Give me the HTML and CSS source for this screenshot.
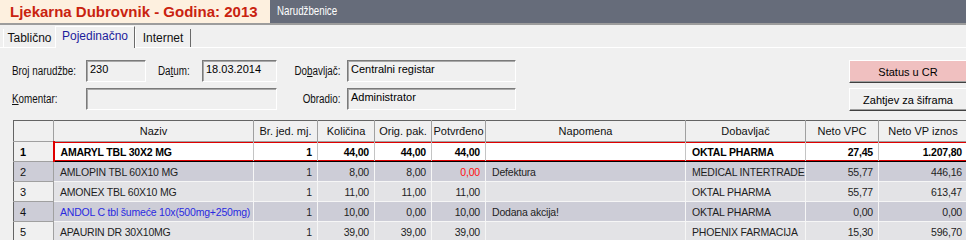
FILE: index.html
```html
<!DOCTYPE html>
<html lang="hr">
<head>
  <meta charset="UTF-8" />
  <title>Narudžbenice</title>
  <link rel="stylesheet" href="styles.css">
</head>
<body>

  <div class="topbar">
    <div class="brand">Ljekarna Dubrovnik - Godina: 2013</div>
    <div class="module"><span>Narudžbenice</span></div>
  </div>

  <div class="tabs">
    <span class="tab tab-first">Tablično</span>
    <span class="tab active">Pojedinačno</span>
    <span class="tab">Internet</span>
  </div>

  <div class="form">
    <label class="lbl">Broj narudžbe:</label>
    <div class="field">230</div>
    <span></span>
    <label class="lbl">Da<u>t</u>um:</label>
    <div class="field">18.03.2014</div>
    <label class="lbl lbl-right">Do<u>b</u>avljač:</label>
    <div class="field">Centralni registar</div>
    <span></span>
    <button class="btn btn-status">Status u CR</button>

    <label class="lbl"><u>K</u>omentar:</label>
    <div class="field field-wide"></div>
    <label class="lbl lbl-right">Obradio:</label>
    <div class="field">Administrator</div>
    <span></span>
    <button class="btn">Zahtjev za šiframa</button>
  </div>

  <table class="grid">
    <colgroup>
      <col style="width:40px"><col style="width:200px"><col style="width:64px">
      <col style="width:57px"><col style="width:57px"><col style="width:54px">
      <col style="width:200px"><col style="width:120px"><col style="width:73px">
      <col style="width:89px">
    </colgroup>
    <thead>
      <tr>
        <th></th>
        <th>Naziv</th>
        <th>Br. jed. mj.</th>
        <th>Količina</th>
        <th>Orig. pak.</th>
        <th>Potvrđeno</th>
        <th>Napomena</th>
        <th>Dobavljač</th>
        <th>Neto VPC</th>
        <th>Neto VP iznos</th>
      </tr>
    </thead>
    <tbody>
      <tr class="sel">
        <td class="rh">1</td>
        <td class="first">AMARYL TBL 30X2 MG</td>
        <td class="num">1</td>
        <td class="num">44,00</td>
        <td class="num">44,00</td>
        <td class="num">44,00</td>
        <td></td>
        <td>OKTAL PHARMA</td>
        <td class="num">27,45</td>
        <td class="num">1.207,80</td>
      </tr>
      <tr class="dark">
        <td class="rh">2</td>
        <td>AMLOPIN TBL 60X10 MG</td>
        <td class="num">1</td>
        <td class="num">8,00</td>
        <td class="num">8,00</td>
        <td class="num red">0,00</td>
        <td>Defektura</td>
        <td>MEDICAL INTERTRADE</td>
        <td class="num">55,77</td>
        <td class="num">446,16</td>
      </tr>
      <tr>
        <td class="rh">3</td>
        <td>AMONEX TBL 60X10 MG</td>
        <td class="num">1</td>
        <td class="num">11,00</td>
        <td class="num">11,00</td>
        <td class="num">11,00</td>
        <td></td>
        <td>OKTAL PHARMA</td>
        <td class="num">55,77</td>
        <td class="num">613,47</td>
      </tr>
      <tr class="dark">
        <td class="rh">4</td>
        <td class="blue">ANDOL C tbl šumeće 10x(500mg+250mg)</td>
        <td class="num">1</td>
        <td class="num">10,00</td>
        <td class="num">0,00</td>
        <td class="num">10,00</td>
        <td>Dodana akcija!</td>
        <td>OKTAL PHARMA</td>
        <td class="num">0,00</td>
        <td class="num">0,00</td>
      </tr>
      <tr>
        <td class="rh">5</td>
        <td>APAURIN DR 30X10MG</td>
        <td class="num">1</td>
        <td class="num">39,00</td>
        <td class="num">39,00</td>
        <td class="num">39,00</td>
        <td></td>
        <td>PHOENIX FARMACIJA</td>
        <td class="num">15,30</td>
        <td class="num">596,70</td>
      </tr>
    </tbody>
  </table>

</body>
</html>
```

FILE: styles.css
```css
:root {
  --page: #f0f0f0;
  --bar: #666c7a;
  --title: #c9220f;
  --row-dark: #cdcdd7;
  --row-light: #e3e3e6;
  --line: #a0a0a0;
}

* {
  box-sizing: border-box;
}

body {
  margin: 0;
  width: 966px;
  height: 240px;
  overflow: hidden;
  background-color: var(--page);
  font-family: 'Liberation Sans', Arial, sans-serif;
  font-size: 11px;
  color: #1e1e1e;
}

/* top bar */
.topbar {
  display: flex;
  height: 25px;
  background-color: var(--bar);
  border-bottom: 2px solid #9c9c9c;
}

.brand {
  width: 270px;
  padding-left: 10px;
  background-color: #fdf0df;
  color: var(--title);
  font-size: 15px;
  font-weight: bold;
  line-height: 23px;
}

.module {
  padding-left: 7px;
  color: white;
  font-size: 13px;
  line-height: 22px;
}

.module span {
  display: inline-block;
  transform: scaleX(0.75);
  transform-origin: left center;
}

/* tabs */
.tabs {
  display: flex;
  align-items: flex-end;
  height: 23px;
  padding-left: 3px;
  border-bottom: 1px solid white;
}

.tab {
  height: 18px;
  line-height: 18px;
  text-align: center;
  font-size: 12px;
  color: #111;
  border-left: 1px solid white;
  border-right: 1px solid #6a6a6a;
  width: 56px;
}

.tab-first {
  width: 52px;
  border-right: none;
}

.tab.active {
  width: 80px;
  height: 22px;
  line-height: 19px;
  margin-bottom: -1px;
  border-top: 1px solid white;
  background-color: var(--page);
  color: #1c1c9c;
}

/* form */
.form {
  display: grid;
  grid-template-columns: 74px 60px 12px 44px 75px 70px 169px 333px 120px;
  grid-template-rows: 22px 22px;
  row-gap: 6px;
  padding: 12px 0 0 12px;
  width: 1000px;
}

.lbl {
  align-self: center;
  white-space: nowrap;
  font-size: 12px;
  color: #111;
  transform: scaleX(0.82);
  transform-origin: left center;
}

.lbl-right {
  text-align: right;
  padding-right: 8px;
  transform-origin: right center;
}

.field {
  border: 1px solid;
  border-color: #7a7a7a white white #7a7a7a;
  box-shadow: inset 1px 1px 0 #a8a8a8;
  padding: 2px 3px;
  font-size: 11px;
  color: #000;
  background-color: var(--page);
}

.field-wide {
  grid-column: 2 / 6;
}

.btn {
  height: 23px;
  padding: 0;
  font-family: 'Liberation Sans', Arial, sans-serif;
  font-size: 11px;
  color: #000;
  background-color: var(--page);
  border: 1px solid;
  border-color: white #404040 #404040 white;
  box-shadow: inset 0 -1px 0 #a0a0a0;
  width: 118px;
}

.btn-status {
  background-color: #f0c0c0;
}

/* grid */
.grid {
  margin: 10px 0 0 13px;
  border-collapse: collapse;
  table-layout: fixed;
  width: 954px;
  border-top: 1px solid #646464;
  border-left: 1px solid #646464;
}

.grid th {
  height: 21px;
  padding: 0;
  font-weight: normal;
  color: #111;
  background-color: var(--page);
  border-right: 1px solid var(--line);
  border-bottom: 1px solid var(--line);
  white-space: nowrap;
}

.grid td {
  height: 20px;
  padding: 0 5px 0 6px;
  font-size: 10.5px;
  letter-spacing: -0.2px;
  white-space: nowrap;
  overflow: hidden;
  background-color: var(--row-light);
  border-right: 1px solid #f6f6f6;
  border-bottom: 1px solid #f6f6f6;
}

.grid tr.dark td {
  background-color: var(--row-dark);
}

.grid td.rh {
  font-size: 11px;
  letter-spacing: 0;
  background-color: var(--page);
  border-right: 1px solid var(--line);
  border-bottom: 1px solid var(--line);
  color: #111;
}

.grid .num {
  text-align: right;
}

.grid .red {
  color: #ff1010;
}

.grid .blue {
  color: #2a2ae0;
}

.grid tr.sel td {
  background-color: white;
  font-weight: bold;
  color: #000;
  border-top: 1px solid #000;
  border-bottom: 1px solid #000;
  border-right: 1px solid #c4c4c4;
  box-shadow: inset 0 1px 0 #e00000, inset 0 -1px 0 #e00000;
}

.grid tr.sel td.rh {
  background-color: var(--page);
  border-top: 1px solid var(--line);
  border-bottom: 1px solid var(--line);
  border-right: 1px solid var(--line);
  box-shadow: none;
}

.grid tr.sel td.first {
  border-left: 2px solid #e00000;
}
```
